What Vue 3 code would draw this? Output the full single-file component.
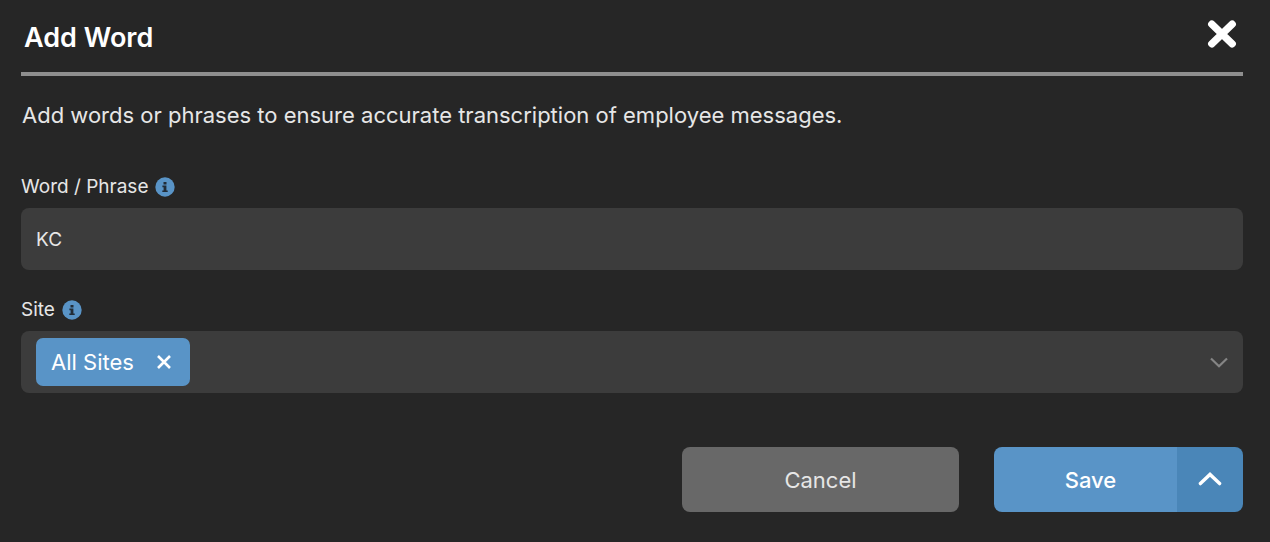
<template>
  <form class="dialog" @submit.prevent="handleSubmit">
    <header class="dialog-header">
      <h1 class="dialog-title">Add Word</h1>
      <button class="close-button" type="button" aria-label="Close">
        <svg width="30" height="30" viewBox="0 0 30 30">
          <path d="M4.8 5.2L25.2 24.8M25.2 5.2L4.8 24.8" fill="none" stroke="currentColor" stroke-width="7.4" stroke-linecap="round" />
        </svg>
      </button>
    </header>

    <p class="description">Add words or phrases to ensure accurate transcription of employee messages.</p>

    <div class="field">
      <div class="field-heading">
        <label class="field-label" for="word">Word / Phrase</label>
        <svg class="info-icon" viewBox="0 0 20 20">
          <circle cx="10" cy="10" r="9.7" fill="#5994c7" />
          <path d="M8.5 5h3v2.4h-3zM7.4 8.6h4v4.8h1.3V15H7.3v-1.6h1.3v-3.2H7.4z" fill="#222d38" />
        </svg>
      </div>
      <input id="word" class="field-box word-input" type="text" v-model="word" />
    </div>

    <div class="field">
      <div class="field-heading">
        <label class="field-label" for="site">Site</label>
        <svg class="info-icon" viewBox="0 0 20 20">
          <circle cx="10" cy="10" r="9.7" fill="#5994c7" />
          <path d="M8.5 5h3v2.4h-3zM7.4 8.6h4v4.8h1.3V15H7.3v-1.6h1.3v-3.2H7.4z" fill="#222d38" />
        </svg>
      </div>
      <div class="field-box site-box">
        <span v-for="(site, index) in sites" :key="site" class="site-tag">
          {{ site }}
          <button class="tag-remove" type="button" :aria-label="'Remove ' + site" @click="removeSite(index)">
            <svg width="16" height="16" viewBox="0 0 16 16">
              <path d="M2 2L14 14M14 2L2 14" fill="none" stroke="currentColor" stroke-width="2.6" />
            </svg>
          </button>
        </span>
        <select id="site" class="site-select">
          <option value=""></option>
        </select>
        <svg class="site-arrow" width="18" height="12" viewBox="0 0 18 12">
          <path d="M1 2.5L9 10.3L17 2.5" fill="none" stroke="currentColor" stroke-width="2.2" />
        </svg>
      </div>
    </div>

    <footer class="actions">
      <button class="cancel-button" type="button">Cancel</button>
      <div class="save-group">
        <button class="save-button" type="submit">Save</button>
        <button class="save-more" type="button" aria-label="More save options">
          <svg width="24" height="16" viewBox="0 0 24 16">
            <path d="M2.4 11.6L12 2.4L21.6 11.6" fill="none" stroke="currentColor" stroke-width="3.4" stroke-linecap="round" />
          </svg>
        </button>
      </div>
    </footer>
  </form>
</template>

<script setup>
import { ref } from 'vue';

const word = ref('KC');
const sites = ref(['All Sites']);

const removeSite = (index) => {
  sites.value.splice(index, 1);
};

const handleSubmit = () => {
  word.value = word.value.trim();
};
</script>

<style>
body {
  background-color: #262626;
}
</style>

<style scoped>
.dialog {
  padding: 16px 27px 30px 21px;
  color: #e6e6e6;
  font-family: Inter, "Liberation Sans", sans-serif;
}

button,
input,
select {
  font-family: inherit;
}

button {
  border: none;
  cursor: pointer;
}

svg {
  display: block;
}

.dialog-header {
  display: flex;
  justify-content: space-between;
  align-items: flex-start;
  height: 56px;
  padding: 0 6px 0 3px;
  border-bottom: 4px solid #8e8e8e;
}

.dialog-title {
  margin: 4px 0 0;
  color: #fff;
  font-size: 27px;
  font-weight: 600;
  line-height: 36px;
}

.close-button {
  margin-top: 3px;
  padding: 0;
  background: none;
  color: #fff;
}

.description {
  margin: 24px 0 45px;
  padding-left: 1px;
  font-size: 22px;
  line-height: 30px;
}

.field {
  margin-bottom: 28px;
}

.field-heading {
  display: flex;
  align-items: center;
  gap: 7px;
  height: 24px;
  margin-bottom: 9px;
}

.field-label {
  font-size: 19px;
  line-height: 24px;
}

.info-icon {
  width: 20px;
  height: 20px;
}

.field-box {
  box-sizing: border-box;
  width: 100%;
  height: 62px;
  padding: 0 15px;
  border: none;
  border-radius: 8px;
  background-color: #3c3c3c;
  color: #e6e6e6;
}

.word-input {
  display: block;
  font-size: 19px;
}

.site-box {
  display: flex;
  align-items: center;
}

.site-tag {
  display: flex;
  align-items: center;
  gap: 22px;
  height: 48px;
  padding: 0 18px 0 15px;
  border-radius: 7px;
  background-color: #5994c7;
  color: #fff;
  font-size: 22px;
}

.tag-remove {
  padding: 0;
  background: none;
  color: #fff;
}

.site-select {
  flex: 1;
  height: 48px;
  border: none;
  background: none;
  color: inherit;
  font-size: 19px;
  appearance: none;
}

.site-arrow {
  color: #858585;
}

.actions {
  display: flex;
  justify-content: flex-end;
  gap: 35px;
  margin-top: 54px;
}

.cancel-button {
  width: 277px;
  height: 65px;
  border-radius: 8px;
  background-color: #686868;
  color: #e6e6e6;
  font-size: 22px;
}

.save-group {
  display: flex;
  width: 249px;
  height: 65px;
  border-radius: 8px;
  overflow: hidden;
}

.save-button {
  flex: 1;
  padding: 0 0 0 10px;
  background-color: #5994c7;
  color: #fff;
  font-size: 22px;
  font-weight: 500;
}

.save-more {
  display: flex;
  justify-content: center;
  align-items: center;
  width: 66px;
  padding: 0;
  background-color: #4a86b8;
  color: #fff;
}
</style>
